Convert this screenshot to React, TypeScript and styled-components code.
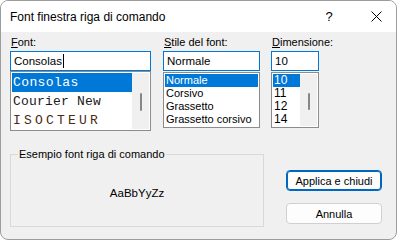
import React from 'react';
import styled, { createGlobalStyle } from 'styled-components';

const GlobalStyle = createGlobalStyle`
  html, body {
    margin: 0;
    padding: 0;
    background: #ffffff;
  }
  body {
    font-family: 'Liberation Sans', Arial, sans-serif;
    color: #000;
  }
`;

const Window = styled.div`
  width: 397px;
  height: 240px;
  box-sizing: border-box;
  border: 1px solid #9c9c9c;
  border-radius: 8px;
  background: #f0f0f0;
  overflow: hidden;
  display: flex;
  flex-direction: column;
`;

const TitleBar = styled.div`
  height: 31px;
  flex-shrink: 0;
  background: #ffffff;
  display: flex;
  align-items: center;
  padding-left: 9px;
  padding-right: 5px;
`;

const Title = styled.span`
  flex: 1;
  font-size: 12px;
  line-height: 14px;
`;

const CaptionButtons = styled.div`
  display: flex;
  gap: 17px;
`;

const CaptionButton = styled.div`
  width: 30px;
  height: 20px;
  display: flex;
  align-items: center;
  justify-content: center;
  font-size: 13px;
`;

const Content = styled.div`
  padding: 4px 14px 0 9px;
  display: flex;
  flex-direction: column;
`;

const TopRow = styled.div`
  display: flex;
`;

const Column = styled.div<{ $width: number; $gap?: number }>`
  width: ${p => p.$width}px;
  margin-left: ${p => p.$gap || 0}px;
  display: flex;
  flex-direction: column;
`;

const Label = styled.div`
  font-size: 11px;
  line-height: 13px;
  height: 13px;
  margin-bottom: 2px;
  padding-left: 1px;

  u {
    text-decoration: underline;
    text-underline-offset: 1px;
  }
`;

const Input = styled.div`
  height: 20px;
  box-sizing: border-box;
  border: 1px solid #0078d7;
  background: #ffffff;
  padding-left: 3px;
  font-size: 11.5px;
  line-height: 18px;
  display: flex;
  align-items: center;
  white-space: nowrap;
`;

const Caret = styled.span`
  display: inline-block;
  width: 1px;
  height: 14px;
  background: #000;
  margin-left: 1px;
`;

const List = styled.div<{ $height: number; $top?: number }>`
  height: ${p => p.$height}px;
  margin-top: ${p => p.$top || 0}px;
  box-sizing: border-box;
  border: 1px solid #8c8c8c;
  background: #ffffff;
  padding: 1px;
  display: flex;
  overflow: hidden;
`;

const Items = styled.div`
  flex: 1;
  min-width: 0;
  overflow: hidden;
`;

const Item = styled.div<{ $selected?: boolean; $height: number; $size: number; $mono?: boolean; $spacing?: number; $tint?: string }>`
  height: ${p => p.$height}px;
  line-height: ${p => p.$height}px;
  font-size: ${p => p.$size}px;
  font-family: ${p => (p.$mono ? "'Liberation Mono', 'DejaVu Sans Mono', monospace" : "'Liberation Sans', Arial, sans-serif")};
  letter-spacing: ${p => p.$spacing || 0}px;
  padding-left: 1px;
  white-space: nowrap;
  background: ${p => (p.$selected ? '#0078d7' : 'transparent')};
  color: ${p => (p.$selected ? '#ffffff' : p.$tint || '#000000')};
`;

const Scrollbar = styled.div`
  width: 17px;
  flex-shrink: 0;
  background: #f0f0f0;
  display: flex;
  justify-content: center;
`;

const Thumb = styled.div<{ $offset: number; $length: number }>`
  width: 2px;
  height: ${p => p.$length}px;
  margin-top: ${p => p.$offset}px;
  background: #868686;
  border-radius: 1px;
`;

const BottomRow = styled.div`
  display: flex;
  margin-top: 17px;
`;

const GroupBox = styled.fieldset`
  width: 254px;
  height: 79px;
  box-sizing: border-box;
  margin: 0;
  padding: 0;
  min-width: 0;
  border: 1px solid #d9d9d9;
`;

const GroupLegend = styled.legend`
  font-size: 11px;
  line-height: 13px;
  padding: 0 1px;
  margin-left: 7px;
`;

const SampleArea = styled.div`
  height: 64px;
  display: flex;
  align-items: center;
  justify-content: center;
  font-size: 11.5px;
`;

const ButtonColumn = styled.div`
  margin-left: 22px;
  padding-top: 22px;
  display: flex;
  flex-direction: column;
  gap: 12px;
`;

const Button = styled.div<{ $primary?: boolean }>`
  width: 96px;
  height: 21px;
  box-sizing: border-box;
  border-radius: 4px;
  background: #fdfdfd;
  border: 1px solid ${p => (p.$primary ? '#0067c0' : '#d0d0d0')};
  box-shadow: ${p => (p.$primary ? 'inset 0 0 0 1px #0067c0' : 'none')};
  font-size: 11px;
  display: flex;
  align-items: center;
  justify-content: center;
`;

const fonts = [
  { name: 'Consolas', spacing: 0.4, tint: '#000' },
  { name: 'Courier New', spacing: 0.2, tint: '#1a1a1a' },
  { name: 'ISOCTEUR', spacing: 3.2, tint: '#4a2a14' },
];

const styles = ['Normale', 'Corsivo', 'Grassetto', 'Grassetto corsivo'];
const sizes = ['10', '11', '12', '14'];

const App = () => {
  return (
    <>
      <GlobalStyle />
      <Window>
        <TitleBar>
          <Title>Font finestra riga di comando</Title>
          <CaptionButtons>
            <CaptionButton>?</CaptionButton>
            <CaptionButton>
              <svg width="11" height="11" viewBox="0 0 11 11">
                <path d="M0.5 0.5 L10.5 10.5 M10.5 0.5 L0.5 10.5" stroke="#000" strokeWidth="1" fill="none" />
              </svg>
            </CaptionButton>
          </CaptionButtons>
        </TitleBar>
        <Content>
          <TopRow>
            <Column $width={141}>
              <Label>
                <u>F</u>ont:
              </Label>
              <Input>
                Consolas
                <Caret />
              </Input>
              <List $height={60}>
                <Items>
                  {fonts.map((f, i) => (
                    <Item key={f.name} $selected={i === 0} $height={19} $size={13} $mono $spacing={f.spacing} $tint={f.tint}>
                      {f.name}
                    </Item>
                  ))}
                </Items>
                <Scrollbar>
                  <Thumb $offset={20} $length={18} />
                </Scrollbar>
              </List>
            </Column>
            <Column $width={97} $gap={12}>
              <Label>
                <u>S</u>tile del font:
              </Label>
              <Input>Normale</Input>
              <List $height={56} $top={1}>
                <Items>
                  {styles.map((s, i) => (
                    <Item key={s} $selected={i === 0} $height={13} $size={11}>
                      {s}
                    </Item>
                  ))}
                </Items>
              </List>
            </Column>
            <Column $width={48} $gap={11}>
              <Label>
                <u>D</u>imensione:
              </Label>
              <Input>10</Input>
              <List $height={56} $top={1}>
                <Items>
                  {sizes.map((s, i) => (
                    <Item key={s} $selected={i === 0} $height={13} $size={12}>
                      {s}
                    </Item>
                  ))}
                </Items>
                <Scrollbar>
                  <Thumb $offset={19} $length={17} />
                </Scrollbar>
              </List>
            </Column>
          </TopRow>
          <BottomRow>
            <GroupBox>
              <GroupLegend>Esempio font riga di comando</GroupLegend>
              <SampleArea>AaBbYyZz</SampleArea>
            </GroupBox>
            <ButtonColumn>
              <Button $primary>Applica e chiudi</Button>
              <Button>Annulla</Button>
            </ButtonColumn>
          </BottomRow>
        </Content>
      </Window>
    </>
  );
};

export default App;
